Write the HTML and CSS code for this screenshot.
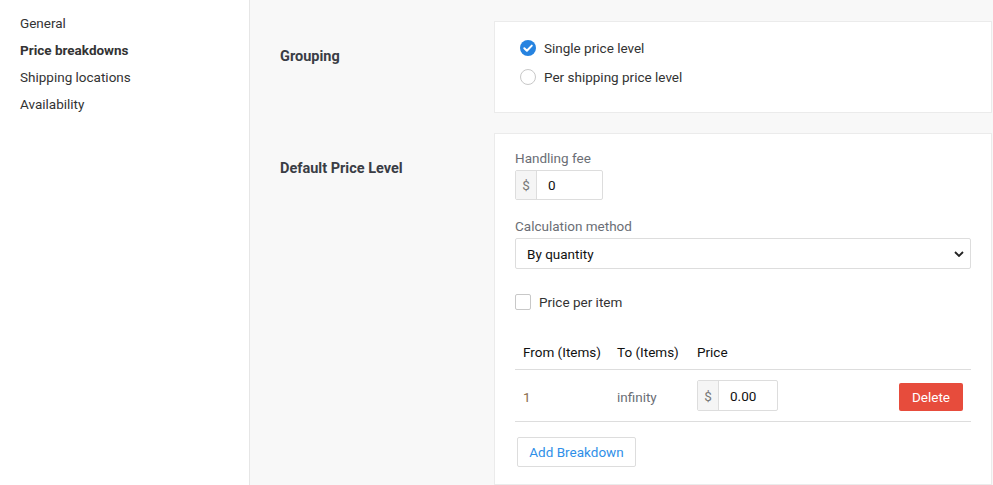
FILE: index.html
```html
<!DOCTYPE html>
<html>
<head>
<meta charset="utf-8">
<link rel="stylesheet" href="styles.css">
</head>
<body>
<div class="page">
  <nav class="sidebar">
    <a class="nav-item">General</a>
    <a class="nav-item active">Price breakdowns</a>
    <a class="nav-item">Shipping locations</a>
    <a class="nav-item">Availability</a>
  </nav>
  <main class="main">
    <section class="row">
      <div class="row-label">Grouping</div>
      <div class="card card-grouping">
        <label class="radio">
          <span class="radio-icon checked">
            <svg viewBox="0 0 16 16" width="16" height="16"><circle cx="8" cy="8" r="8" fill="#2683e0"/><path d="M4.3 8.2 L6.9 10.7 L11.8 5.6" fill="none" stroke="#fff" stroke-width="2" stroke-linecap="round" stroke-linejoin="round"/></svg>
          </span>
          <span>Single price level</span>
        </label>
        <label class="radio">
          <span class="radio-icon"></span>
          <span>Per shipping price level</span>
        </label>
      </div>
    </section>
    <section class="row">
      <div class="row-label">Default Price Level</div>
      <div class="card card-price">
        <div class="field">
          <div class="field-label">Handling fee</div>
          <div class="input-group small">
            <span class="addon">$</span>
            <span class="input">0</span>
          </div>
        </div>
        <div class="field">
          <div class="field-label">Calculation method</div>
          <div class="select">
            <span>By quantity</span>
            <svg class="chev" viewBox="0 0 10 6" width="10" height="6"><path d="M1 1 L5 5 L9 1" fill="none" stroke="#222" stroke-width="1.8"/></svg>
          </div>
        </div>
        <label class="checkbox">
          <span class="box"></span>
          <span>Price per item</span>
        </label>
        <table class="table">
          <thead>
            <tr><th class="c-from">From (Items)</th><th class="c-to">To (Items)</th><th>Price</th><th></th></tr>
          </thead>
          <tbody>
            <tr>
              <td class="num">1</td>
              <td class="muted">infinity</td>
              <td>
                <div class="input-group price">
                  <span class="addon">$</span>
                  <span class="input">0.00</span>
                </div>
              </td>
              <td class="right"><button class="btn-delete">Delete</button></td>
            </tr>
          </tbody>
        </table>
        <button class="btn-add">Add Breakdown</button>
      </div>
    </section>
  </main>
</div>
</body>
</html>
```

FILE: styles.css
```css
* { box-sizing: border-box; }
html, body { margin: 0; padding: 0; }
body {
  font-family: Roboto, "Liberation Sans", sans-serif;
  font-size: 13.5px;
  color: #333;
  background: #f8f8f8;
}
.page {
  display: flex;
  height: 485px;
  overflow: hidden;
}
.sidebar {
  width: 250px;
  flex: none;
  background: #fff;
  border-right: 1px solid #e6e6e6;
  padding: 14px 20px 0;
  display: flex;
  flex-direction: column;
}
.nav-item {
  display: block;
  height: 27px;
  line-height: 18px;
  color: #333;
}
.nav-item.active { font-weight: 700; }
.main {
  flex: 1;
  padding: 21px 1px 0 30px;
  display: flex;
  flex-direction: column;
  gap: 20px;
}
.row { display: flex; }
.row-label {
  width: 214px;
  flex: none;
  font-weight: 700;
  font-size: 14.5px;
  color: #3a3d45;
  padding-top: 27px;
  line-height: 18px;
}
.card {
  flex: 1;
  background: #fff;
  border: 1px solid #ebebeb;
  padding: 0 20px;
}
.card-grouping {
  height: 92px;
  padding-top: 17px;
  padding-left: 25px;
}
.radio {
  display: flex;
  align-items: center;
  height: 18px;
  margin-bottom: 11px;
  color: #333;
}
.radio-icon {
  width: 16px; height: 16px;
  border: 1px solid #c8c8c8;
  border-radius: 50%;
  margin-right: 8px;
  display: inline-flex;
}
.radio-icon.checked { border: none; }
.card-price { padding-top: 15px; padding-bottom: 17px; }
.field-label {
  color: #6b6e75;
  line-height: 18px;
  margin-bottom: 3px;
}
.field { margin-bottom: 17px; }
.field:nth-child(2) { margin-bottom: 24px; }
.input-group {
  display: flex;
  border: 1px solid #ddd;
  border-radius: 2px;
  height: 30px;
  background: #fff;
}
.input-group.small { width: 88px; height: 30px; }
.addon {
  width: 21px;
  flex: none;
  background: #f5f5f5;
  border-right: 1px solid #ddd;
  color: #777;
  display: flex;
  align-items: center;
  justify-content: center;
}
.input {
  display: flex;
  align-items: center;
  padding-left: 11px;
  color: #111;
}
.select {
  height: 31px;
  border: 1px solid #ddd;
  border-radius: 2px;
  display: flex;
  align-items: center;
  justify-content: space-between;
  padding: 0 6px 0 11px;
  color: #111;
}
.checkbox {
  display: flex;
  align-items: center;
  height: 18px;
  margin-bottom: 33px;
}
.box {
  width: 16px; height: 16px;
  border: 1px solid #c8c8c8;
  border-radius: 2px;
  margin-right: 8px;
}
.table {
  width: 100%;
  border-collapse: collapse;
  margin-bottom: 15px;
}
.table th {
  text-align: left;
  font-weight: 400;
  color: #111;
  padding: 0 8px 9px;
  border-bottom: 1px solid #ddd;
  line-height: 16px;
  white-space: nowrap;
}
.table th.c-from { width: 92px; }
.table th.c-to { width: 80px; }
.table td {
  padding: 10px 8px;
  border-bottom: 1px solid #ddd;
  vertical-align: middle;
  white-space: nowrap;
}
.table td.num { color: #8a6a4a; padding-top: 12px; }
.table td.muted { color: #6b6e75; padding-top: 12px; }
.table td.right { text-align: right; padding-top: 12px; padding-bottom: 10px; }
.input-group.price { width: 81px; height: 31px; }
.btn-delete {
  display: block;
  margin-left: auto;
  background: #e74c3c;
  color: #fff;
  border: none;
  border-radius: 2px;
  font-family: inherit;
  font-size: 13.5px;
  width: 64px;
  height: 28px;
  padding: 0;
}
.btn-add {
  margin-left: 2px;
  background: #fff;
  border: 1px solid #ddd;
  border-radius: 2px;
  color: #2f8fe8;
  font-family: inherit;
  font-size: 13.5px;
  height: 30px;
  width: 119px;
  padding: 0;
}
```
